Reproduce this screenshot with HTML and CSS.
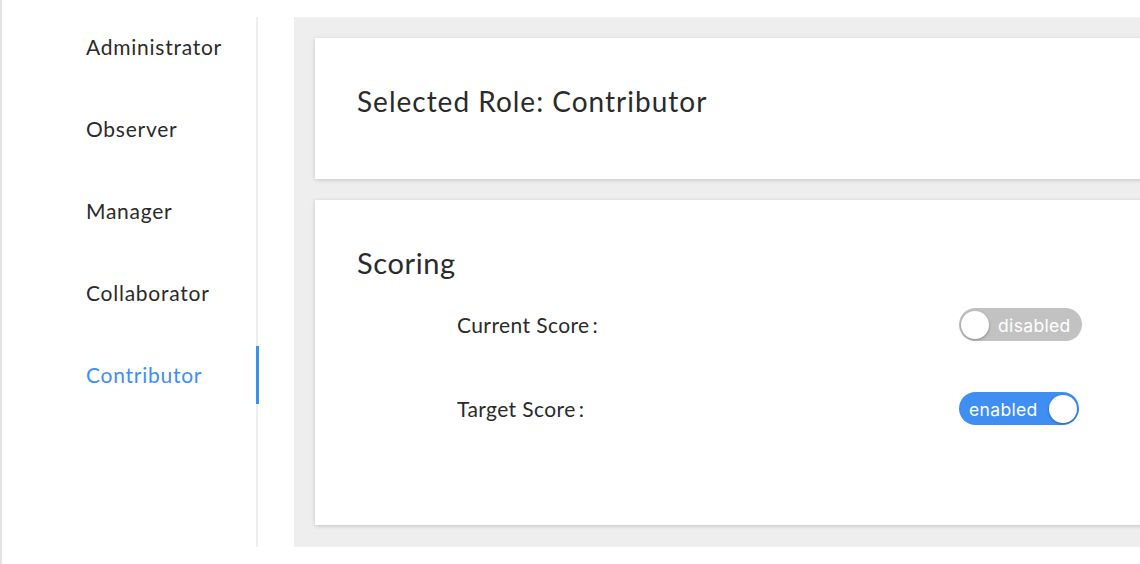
FILE: index.html
```html
<!DOCTYPE html>
<html lang="en">
<head>
    <meta charset="UTF-8">
    <meta name="viewport" content="width=device-width, initial-scale=1.0">
    <title>Roles</title>
    <link rel="stylesheet" href="styles.css">
</head>
<body>

    <div class="layout">
        <ul class="menu">
            <li class="menu-item">Administrator</li>
            <li class="menu-item">Observer</li>
            <li class="menu-item">Manager</li>
            <li class="menu-item">Collaborator</li>
            <li class="menu-item active">Contributor</li>
        </ul>

        <div class="main">
            <div class="card head">
                <h2>Selected Role: Contributor</h2>
            </div>

            <div class="card scoring">
                <h3>Scoring</h3>
                <div class="rows">
                    <div class="label">Current Score<span class="colon">:</span></div>
                    <div class="switch off">
                        <span class="knob"></span>
                        <span class="switch-text">disabled</span>
                    </div>

                    <div class="label">Target Score<span class="colon">:</span></div>
                    <div class="switch on">
                        <span class="switch-text">enabled</span>
                        <span class="knob"></span>
                    </div>
                </div>
            </div>
        </div>
    </div>

</body>
</html>
```

FILE: styles.css
```css
html, body {
    margin: 0;
    height: 100%;
}
body {
    font-family: Lato, "Open Sans", sans-serif;
    color: #2b2b2b;
    background: white;
    border-left: 2px solid #e2e2e2;
    overflow: hidden;
}
.layout {
    display: flex;
    padding-top: 17px;
    width: 1400px;
}
.menu {
    list-style: none;
    margin: 0;
    padding: 1px 0 0 0;
    width: 254px;
    height: 529px;
    border-right: 2px solid #eeeeee;
    flex-shrink: 0;
}
.menu-item {
    height: 58px;
    line-height: 58px;
    margin-bottom: 24px;
    padding-left: 84px;
    font-size: 21px;
    letter-spacing: 0.75px;
    margin-right: -2px;
}
.menu-item.active {
    color: #3f8ef2;
    border-right: 3px solid #3f8ef2;
    margin-right: -3px;
}
.main {
    margin-left: 36px;
    background: #eeeeee;
    height: 530px;
    padding: 21px 0 0 21px;
    box-sizing: border-box;
    flex: 1;
}
.card {
    background: white;
    box-shadow: 0px 1px 4px rgba(0, 0, 0, 0.18);
    padding: 0 42px;
}
.head {
    height: 141px;
    margin-bottom: 21px;
}
.head h2 {
    margin: 0;
    padding-top: 47px;
    font-size: 28px;
    font-weight: 400;
    line-height: 32px;
    letter-spacing: 1px;
}
.scoring {
    height: 325px;
}
.scoring h3 {
    margin: 0;
    padding-top: 46px;
    font-size: 29px;
    font-weight: 400;
    line-height: 34px;
    letter-spacing: 0.6px;
}
.rows {
    display: grid;
    grid-template-columns: 502px auto;
    row-gap: 51px;
    align-items: center;
    justify-items: start;
    margin: 28px 0 0 100px;
}
.label {
    font-size: 21px;
    letter-spacing: 0.4px;
}
.colon {
    margin-left: 3px;
}
.switch {
    display: flex;
    align-items: center;
    height: 33px;
    border-radius: 17px;
    color: white;
    font-family: Inter, "Open Sans", sans-serif;
    font-size: 17.5px;
    letter-spacing: 0.35px;
    box-sizing: border-box;
}
.switch.off {
    background: #c2c2c2;
    padding: 0 11px 0 2px;
    gap: 9px;
}
.switch.on {
    background: #3f8ef2;
    padding: 0 2px 0 10px;
    gap: 11px;
}
.switch-text {
    padding-top: 1px;
}
.knob {
    width: 28px;
    height: 28px;
    border-radius: 50%;
    background: white;
    box-shadow: 0px 1px 3px rgba(0, 0, 0, 0.3);
}
```
